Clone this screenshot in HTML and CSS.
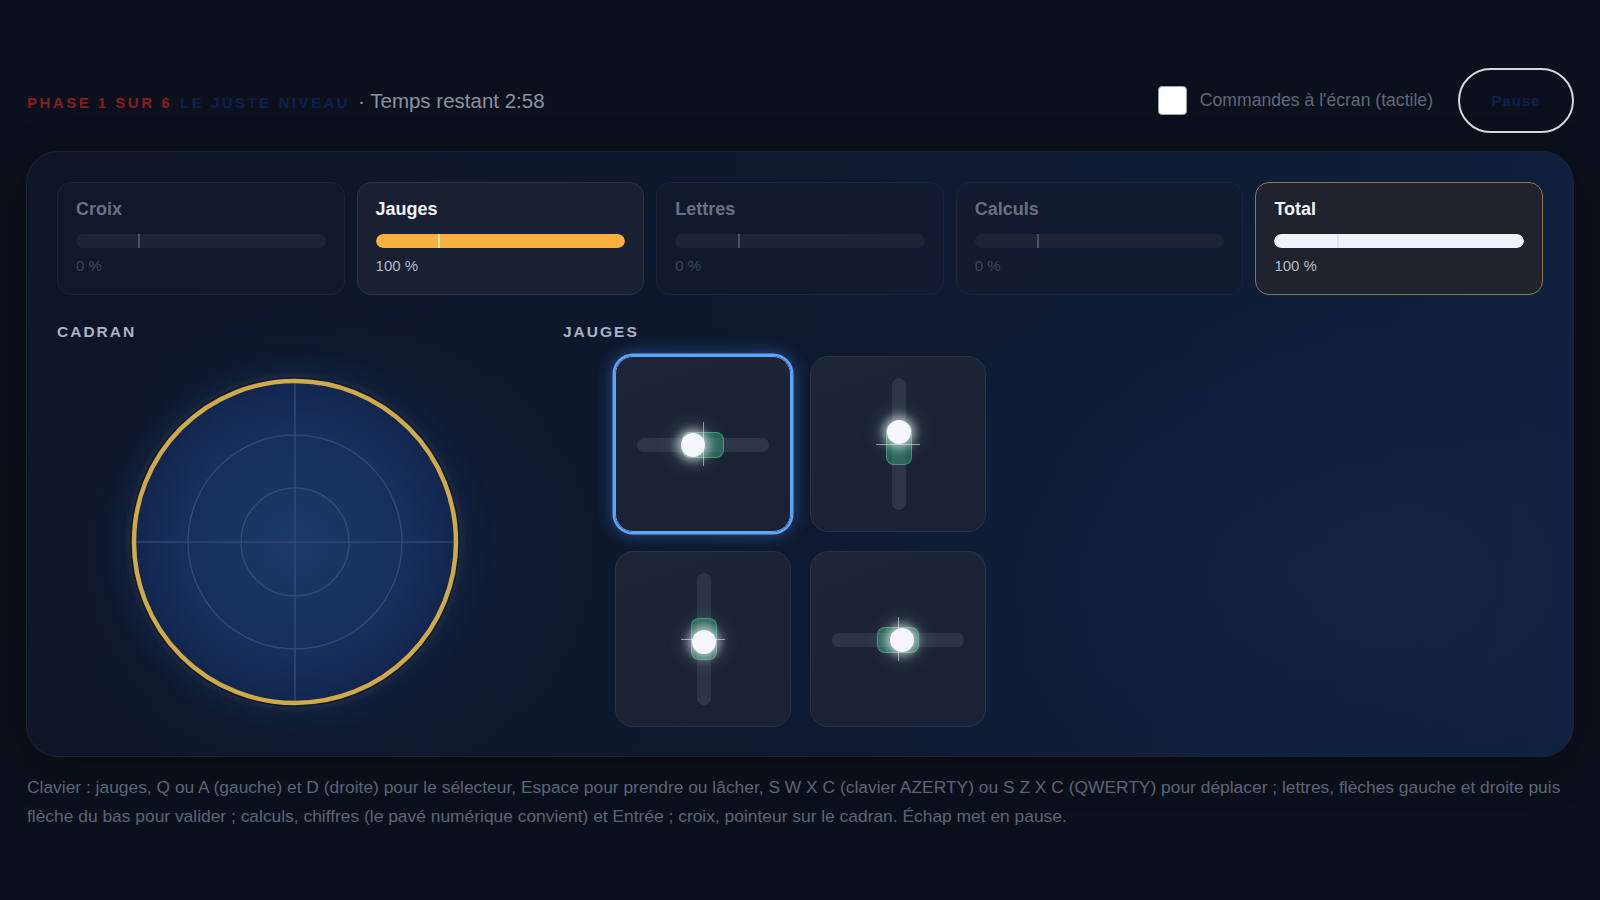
FILE: index.html
```html
<!DOCTYPE html>
<html lang="fr">
<head>
<meta charset="utf-8">
<title>Phase 1 — Jauges</title>
<link rel="stylesheet" href="styles.css">
</head>
<body>
<div class="page">
  <header class="topbar">
    <div class="status">
      <span class="phase">PHASE 1 SUR 6</span>
      <span class="phase-name">LE JUSTE NIVEAU</span>
      <span class="timer">· Temps restant 2:58</span>
    </div>
    <div class="controls">
      <label class="touch"><span class="box"></span>Commandes à l'écran (tactile)</label>
      <button class="pause" type="button">Pause</button>
    </div>
  </header>

  <main class="panel">
    <div class="scores">
      <div class="score">
        <div class="score-title">Croix</div>
        <div class="bar"><span class="tick"></span></div>
        <div class="score-val">0 %</div>
      </div>
      <div class="score active">
        <div class="score-title">Jauges</div>
        <div class="bar"><span class="fill orange" style="width:100%"></span><span class="tick"></span></div>
        <div class="score-val">100 %</div>
      </div>
      <div class="score">
        <div class="score-title">Lettres</div>
        <div class="bar"><span class="tick"></span></div>
        <div class="score-val">0 %</div>
      </div>
      <div class="score">
        <div class="score-title">Calculs</div>
        <div class="bar"><span class="tick"></span></div>
        <div class="score-val">0 %</div>
      </div>
      <div class="score total">
        <div class="score-title">Total</div>
        <div class="bar"><span class="fill white" style="width:100%"></span><span class="tick"></span></div>
        <div class="score-val">100 %</div>
      </div>
    </div>

    <div class="work">
      <section class="dial-zone">
        <h2 class="label">Cadran</h2>
        <div class="dial-area">
          <div class="dial">
            <svg width="330" height="330" viewBox="0 0 330 330">
              <defs>
                <radialGradient id="dialFill" cx="50%" cy="50%" r="50%">
                  <stop offset="0" stop-color="#1b3969"/>
                  <stop offset="0.7" stop-color="#162f5c"/>
                  <stop offset="1" stop-color="#12264e"/>
                </radialGradient>
              </defs>
              <circle cx="165" cy="165" r="161" fill="url(#dialFill)"/>
              <circle cx="165" cy="165" r="107" fill="none" stroke="#36507e" stroke-width="1.5" opacity="0.8"/>
              <circle cx="165" cy="165" r="54" fill="none" stroke="#36507e" stroke-width="1.5" opacity="0.8"/>
              <line x1="5" y1="165" x2="325" y2="165" stroke="#36507e" stroke-width="1.5" opacity="0.8"/>
              <line x1="165" y1="5" x2="165" y2="325" stroke="#36507e" stroke-width="1.5" opacity="0.8"/>
              <circle cx="165" cy="165" r="161" fill="none" stroke="#d0a948" stroke-width="4.5"/>
            </svg>
          </div>
        </div>
      </section>

      <section class="gauge-zone">
        <h2 class="label">Jauges</h2>
        <div class="gauges">
          <div class="tile selected horiz" style="--off:-10px">
            <span class="track"></span><span class="zone"></span><span class="cross"></span><span class="knob"></span>
          </div>
          <div class="tile vert" style="--off:-12px">
            <span class="track"></span><span class="zone"></span><span class="cross"></span><span class="knob"></span>
          </div>
          <div class="tile vert" style="--off:3px">
            <span class="track"></span><span class="zone"></span><span class="cross"></span><span class="knob"></span>
          </div>
          <div class="tile horiz" style="--off:4px">
            <span class="track"></span><span class="zone"></span><span class="cross"></span><span class="knob"></span>
          </div>
        </div>
      </section>
    </div>
  </main>

  <p class="help">Clavier : jauges, Q ou A (gauche) et D (droite) pour le sélecteur, Espace pour prendre ou lâcher, S W X C (clavier AZERTY) ou S Z X C (QWERTY) pour déplacer ; lettres, flèches gauche et droite puis flèche du bas pour valider ; calculs, chiffres (le pavé numérique convient) et Entrée ; croix, pointeur sur le cadran. Échap met en pause.</p>
</div>
</body>
</html>
```

FILE: styles.css
```css
* { box-sizing: border-box; }

html, body {
  margin: 0;
  background: #0b111c;
  color: #cfd5df;
  font-family: "Liberation Sans", Arial, sans-serif;
}

.page {
  width: 1600px;
  height: 900px;
  padding: 68px 26px 0 26px;
  overflow: hidden;
}

/* ---------- top bar ---------- */
.topbar {
  height: 65px;
  display: flex;
  align-items: center;
  justify-content: space-between;
  margin-bottom: 18px;
}

.status {
  display: flex;
  align-items: baseline;
  gap: 8px;
  padding-left: 1px;
}

.phase, .phase-name {
  font-size: 15px;
  font-weight: 700;
  letter-spacing: 2.5px;
}

.phase { color: #8b1b1e; }
.phase-name { color: #0e1f4e; }

.timer {
  font-size: 20.5px;
  color: #8a93a4;
}

.controls {
  display: flex;
  align-items: center;
  gap: 25px;
}

.touch {
  display: flex;
  align-items: center;
  gap: 13px;
  font-size: 17.6px;
  color: #5f6879;
}

.box {
  width: 29px;
  height: 29px;
  border-radius: 4px;
  background: #ffffff;
  border: 1px solid #9aa2b0;
}

.pause {
  width: 116px;
  height: 65px;
  border-radius: 33px;
  border: 2px solid #d3d7de;
  background: transparent;
  color: #0e1f4e;
  font-family: inherit;
  font-size: 15px;
  font-weight: 700;
  letter-spacing: 1px;
}

/* ---------- main panel ---------- */
.panel {
  height: 606px;
  border-radius: 32px;
  border: 1px solid #1b2537;
  padding: 30px;
  background:
    radial-gradient(ellipse 420px 380px at 18% 66%, rgba(32, 64, 130, 0.26), transparent 70%),
    radial-gradient(ellipse 700px 420px at 85% 70%, rgba(22, 44, 90, 0.35), transparent 75%),
    linear-gradient(100deg, #0d1526 0%, #0e1a31 55%, #10203e 100%);
  box-shadow: 0 10px 40px rgba(0, 0, 0, 0.35);
}

.scores {
  display: grid;
  grid-template-columns: repeat(5, 1fr);
  gap: 12px;
}

.score {
  height: 113px;
  border-radius: 14px;
  border: 1px solid #1a2436;
  background: rgba(20, 28, 44, 0.55);
  padding: 15px 18px 0 18px;
}

.score.active {
  background: #182031;
  border-color: #2a3447;
}

.score.total {
  background: #1e232d;
  border-color: #8a7a4d;
}

.score-title {
  font-size: 18px;
  font-weight: 700;
  line-height: 22px;
  color: #687184;
}

.score.active .score-title,
.score.total .score-title { color: #f1f3f7; }

.bar {
  position: relative;
  height: 14px;
  margin-top: 14px;
  border-radius: 7px;
  background: #1c2436;
  overflow: hidden;
}

.fill {
  display: block;
  height: 100%;
  border-radius: 7px;
}

.fill.orange { background: #f8b03f; }
.fill.white { background: #f0f2f6; }

.tick {
  position: absolute;
  left: 25%;
  top: 0;
  width: 2px;
  height: 100%;
  background: #4a5366;
}

.active .tick { background: #fde2a6; }
.total .tick { background: #dfe3ea; }

.score-val {
  margin-top: 9px;
  font-size: 15px;
  line-height: 18px;
  color: #3d4658;
}

.score.active .score-val,
.score.total .score-val { color: #b3bac7; }

/* ---------- work area ---------- */
.work {
  display: grid;
  grid-template-columns: 476px 1fr;
  gap: 30px;
  margin-top: 26px;
}

.label {
  margin: 0 0 13px 0;
  font-size: 15.5px;
  line-height: 22px;
  font-weight: 700;
  letter-spacing: 2px;
  text-transform: uppercase;
  color: #aab3c3;
}

.dial-area {
  height: 371px;
  display: flex;
  align-items: center;
  justify-content: center;
}

.dial {
  width: 330px;
  height: 330px;
  border-radius: 50%;
  box-shadow: 0 0 30px 4px rgba(40, 80, 150, 0.2), 0 0 8px rgba(210, 170, 72, 0.15);
}

.dial svg { display: block; }

/* ---------- gauges ---------- */
.gauges {
  display: grid;
  grid-template-columns: repeat(2, 176px);
  grid-auto-rows: 176px;
  gap: 19px;
  margin-left: 52px;
}

.tile {
  position: relative;
  border-radius: 18px;
  border: 1px solid #2a3346;
  background: linear-gradient(160deg, #1d2537 0%, #192133 100%);
}

.tile.selected {
  border: 1px solid #5ea6f8;
  box-shadow: 0 0 0 2.5px #5ea6f8, 0 0 16px 3px rgba(70, 140, 235, 0.45);
}

.tile span { position: absolute; }

.track {
  background: #2d3547;
  border-radius: 7px;
}

.horiz .track { left: 21px; right: 21px; top: 81px; height: 14px; }
.vert .track { top: 21px; bottom: 21px; left: 81px; width: 14px; }

.zone {
  background: rgba(48, 150, 112, 0.5);
  border: 1px solid rgba(80, 190, 150, 0.55);
  border-radius: 8px;
}

.horiz .zone { width: 42px; height: 26px; left: 66px; top: 75px; }
.vert .zone { width: 26px; height: 42px; left: 75px; top: 66px; }

.cross::before,
.cross::after {
  content: "";
  position: absolute;
  background: rgba(235, 240, 248, 0.55);
}

.cross { left: 87px; top: 87px; width: 0; height: 0; }
.horiz .cross::before { left: 0; top: -22px; width: 1px; height: 44px; }
.vert .cross::before { left: -22px; top: 0; width: 44px; height: 1px; }

.knob {
  width: 24px;
  height: 24px;
  border-radius: 50%;
  background: #f4f6fb;
  box-shadow: 0 0 9px 4px rgba(255, 255, 255, 0.55), 0 0 20px 7px rgba(160, 230, 210, 0.22);
}

.horiz .knob { left: calc(75px + var(--off)); top: 76px; }
.vert .knob { left: 76px; top: calc(75px + var(--off)); }

/* ---------- help text ---------- */
.help {
  margin: 16px 0 0 1px;
  font-size: 17.4px;
  line-height: 29px;
  color: #5c6577;
}
```
